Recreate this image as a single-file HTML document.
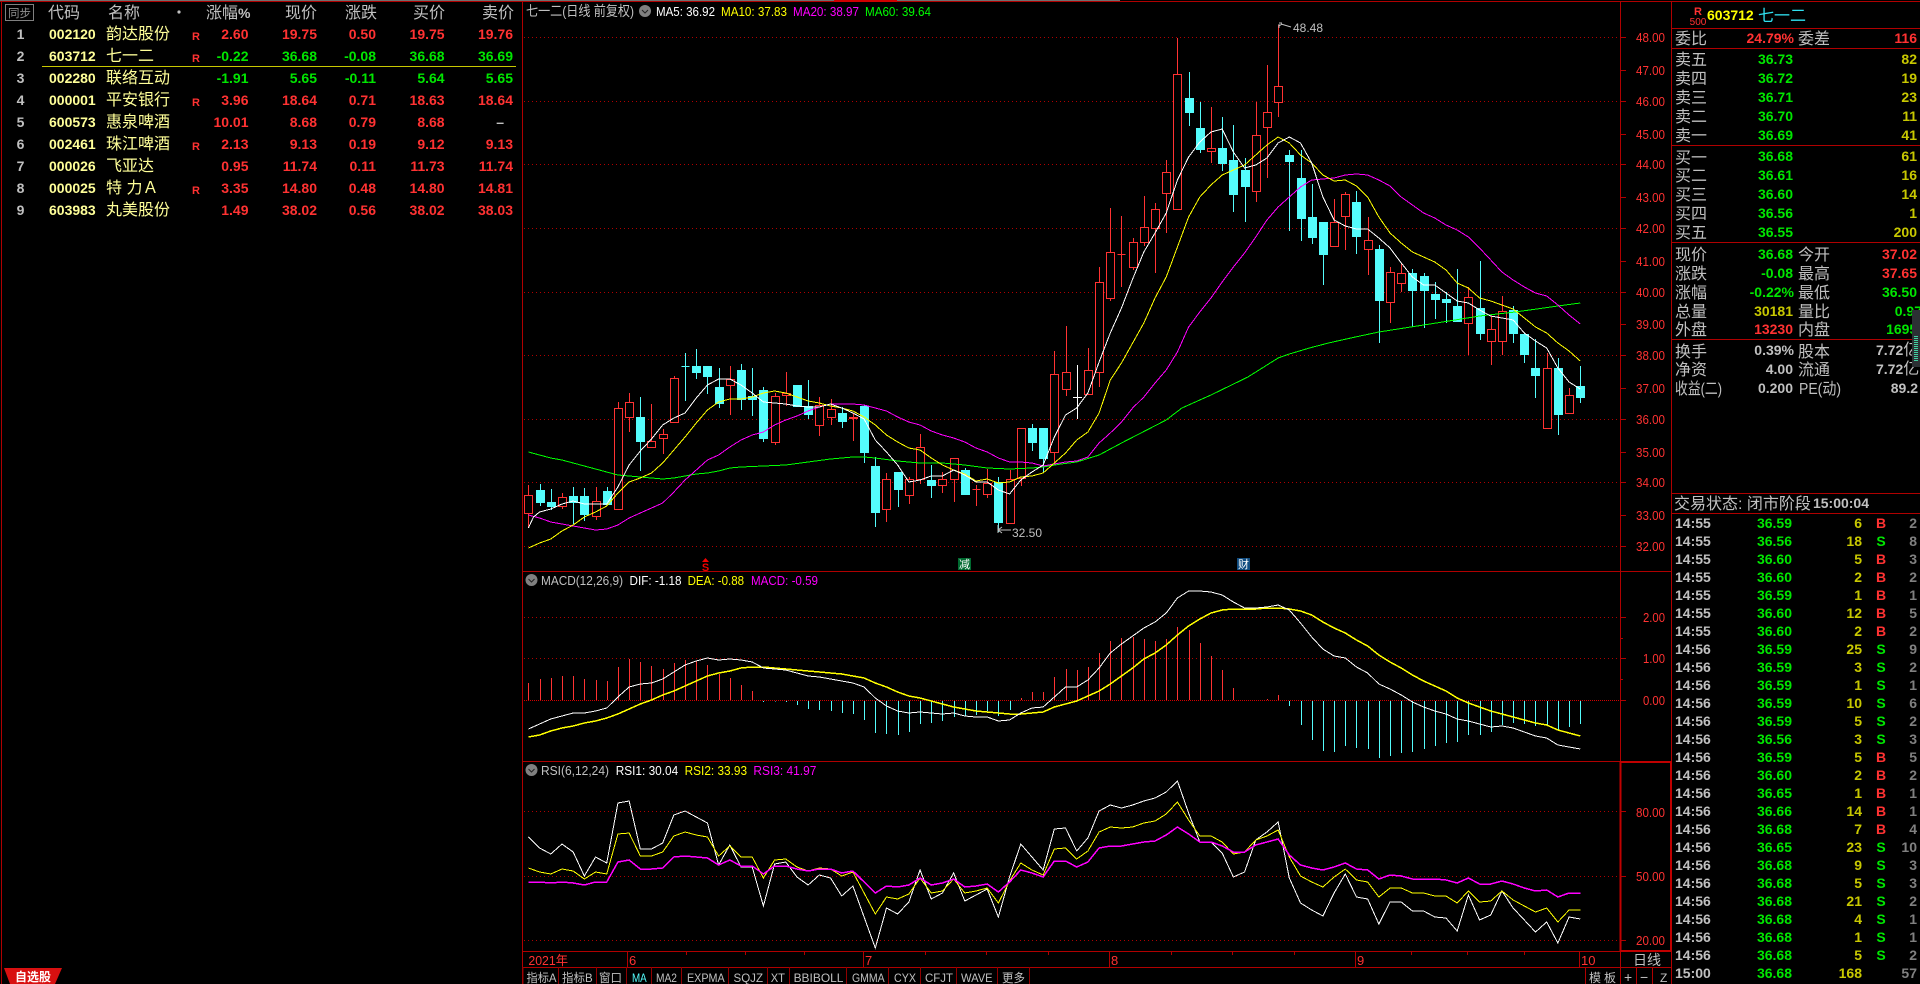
<!DOCTYPE html>
<html lang="zh-CN"><head><meta charset="utf-8"><title>七一二 日线</title>
<style>
html,body{margin:0;padding:0;background:#000;width:1920px;height:984px;overflow:hidden}
body{position:relative;font-family:"Liberation Sans","WenQuanYi Zen Hei","Noto Sans CJK SC",sans-serif}
svg{position:absolute;left:0;top:0;font-family:"Liberation Sans","WenQuanYi Zen Hei","Noto Sans CJK SC",sans-serif}
table{position:absolute;border-collapse:collapse;table-layout:fixed;font-size:14px;font-weight:bold}
td{padding:0;white-space:nowrap;overflow:visible}
#list{left:0;top:23px;width:513px}
#list tr{height:22px}
#list td{text-align:right;color:#ff3232;line-height:22px}
#list td:nth-child(1){text-align:center;color:#c0c0c0}
#list td:nth-child(2){text-align:left;padding-left:8px;color:#ffff99}
#list td:nth-child(3){text-align:left;color:#ffff99;font-size:16px;font-weight:normal;position:relative;top:1px}
#list td:nth-child(4){text-align:left;padding-left:2px;font-size:11px;position:relative;top:3px}
#list tr.d td:nth-child(n+5){color:#00e600}
#tick{left:1675px;top:514px;width:242px}
#tick tr{height:18px}
#tick td{line-height:18px;text-align:right}
#tick td:nth-child(1){text-align:left;color:#c0c0c0}
#tick td:nth-child(2){color:#00e600}
#tick td:nth-child(3){color:#c8c800}
#tick td:nth-child(4){text-align:center}
#tick td:nth-child(5){color:#808080}
.B{color:#ff3232}.S{color:#00e600}
.l{font-size:16px;fill:#c0c0c0}
.n{font-size:14px;font-weight:bold;text-anchor:end}
.a{font-size:13px;fill:#ff3232}
.m{font-size:13px}
.t{font-size:12px;fill:#c0c0c0}
.gr{fill:#00e600}.re{fill:#ff3232}.ye{fill:#c8c800}.gy{fill:#c0c0c0}
.ln{fill:none;vector-effect:non-scaling-stroke;stroke-width:1;shape-rendering:crispEdges}
</style></head><body>
<svg width="1920" height="984" viewBox="0 0 1920 984">
<!-- frame -->
<g shape-rendering="crispEdges">
<path d="M0 0.5H1120" stroke="#707070" fill="none"/>
<path d="M0 1.5H1920" stroke="#b00000" fill="none"/>
<path d="M834 1H897" stroke="#d00000" stroke-width="2" fill="none"/>
<path d="M1.5 1V984M522.5 1V984M1620.5 1V967M1671.5 1V984M523 571.5H1671M523 761.5H1671M523 951.5H1671M523 967.5H1671M1671 28.5H1920M1671 48.5H1920M1671 145.5H1920M1671 242.5H1920M1671 339.5H1920M1671 493.5H1920M1671 513.5H1920M1585.5 967V984M1620.5 967V984M1636.5 967V984M1652.5 967V984" stroke="#b00000" fill="none"/>
<path d="M523 967V984M558.5 967V984M596.5 967V984M626.5 967V984M651.5 967V984M681.5 967V984M728.5 967V984M767.5 967V984M789.5 967V984M846.5 967V984M888.5 967V984M920.5 967V984M956.5 967V984M997.5 967V984M1029.5 967V984" stroke="#900000" fill="none"/>
<path d="M1620 762H1671M1620.5 761V951M1671 761V951M1620 951H1671" stroke="#c00000" stroke-width="2" fill="none"/>
<path d="M627.5 952V967M863.5 952V967M1109.5 952V967M1355.5 952V967M1579.5 952V967M686.5 952V955M745.5 952V955M804.5 952V955M925.5 952V955M986.5 952V955M1048.5 952V955M1171.5 952V955M1232.5 952V955M1294.5 952V955M1411.5 952V955M1467.5 952V955M1524.5 952V955" stroke="#b00000" fill="none"/>
<!-- grid -->
<path d="M524 37.5H1620M524 101.5H1620M524 164.5H1620M524 228.5H1620M524 292.5H1620M524 355.5H1620M524 419.5H1620M524 482.5H1620M524 546.5H1620M524 617.5H1620M524 658.5H1620M524 811.5H1620M524 876.5H1620M524 940.5H1620" stroke="#b00000" stroke-dasharray="1 3" fill="none"/>
<path d="M524 700.5H1620" stroke="#d00000" stroke-dasharray="1 1" fill="none"/>
<!-- axis ticks -->
<path d="M1620 37.5h6M1620 70.5h6M1620 101.5h6M1620 134.5h6M1620 164.5h6M1620 197.5h6M1620 228.5h6M1620 261.5h6M1620 292.5h6M1620 324.5h6M1620 355.5h6M1620 388.5h6M1620 419.5h6M1620 452.5h6M1620 482.5h6M1620 515.5h6M1620 546.5h6M1620 617.5h6M1620 638.5h3M1620 658.5h6M1620 679.5h3M1620 700.5h6M1620 811.5h6M1620 876.5h6M1620 940.5h6" stroke="#b00000" fill="none"/>
<!-- red wicks -->
<path d="M528.5 485V528M562.5 493V509M596.5 487V520M618.5 402V509M629.5 393V432M651.5 404V447M663.5 429V454M674.5 376V423M730.5 366V415M775.5 393V445M786.5 372V406M819.5 397V436M831.5 399V425M853.5 413V441M886.5 473V522M909.5 477V504M920.5 434V484M942.5 472V493M954.5 458V502M976.5 485V506M987.5 469V498M1010.5 470V523M1021.5 428V486M1054.5 351V463M1066.5 326V396M1088.5 348V394M1099.5 267V387M1110.5 208V301M1121.5 216V287M1133.5 238V270M1144.5 196V246M1155.5 203V273M1166.5 160V233M1177.5 38V209M1211.5 107V163M1256.5 102V202M1267.5 65V178M1278.5 25V117M1334.5 199V246M1345.5 192V250M1368.5 217V275M1390.5 267V323M1401.5 263V292M1468.5 287V355M1491.5 316V365M1502.5 296V355M1547.5 353V428M1569.5 388V413" stroke="#ff3232" fill="none"/>
<!-- red bodies -->
<path d="M524.5 495.5h8v18h-8zM558.5 497.5h8v9h-8zM592.5 501.5h8v15h-8zM614.5 408.5h8v101h-8zM625.5 402.5h8v15h-8zM647.5 441.5h8v6h-8zM659.5 434.5h8v4h-8zM670.5 378.5h8v44h-8zM726.5 379.5h8v6h-8zM771.5 396.5h8v46h-8zM782.5 393.5h8v2h-8zM815.5 405.5h8v20h-8zM827.5 409.5h8v8h-8zM849.5 417.5h8v1h-8zM882.5 479.5h8v30h-8zM905.5 479.5h8v16h-8zM916.5 447.5h8v32h-8zM938.5 479.5h8v6h-8zM950.5 458.5h8v21h-8zM972.5 489.5h8v0h-8zM983.5 483.5h8v11h-8zM1006.5 479.5h8v44h-8zM1017.5 428.5h8v50h-8zM1050.5 374.5h8v78h-8zM1062.5 372.5h8v17h-8zM1084.5 370.5h8v24h-8zM1095.5 282.5h8v90h-8zM1106.5 252.5h8v46h-8zM1117.5 254.5h8v0h-8zM1129.5 242.5h8v25h-8zM1140.5 227.5h8v15h-8zM1151.5 209.5h8v19h-8zM1162.5 172.5h8v21h-8zM1173.5 74.5h8v135h-8zM1207.5 148.5h8v3h-8zM1252.5 135.5h8v56h-8zM1263.5 112.5h8v15h-8zM1274.5 86.5h8v16h-8zM1330.5 222.5h8v24h-8zM1341.5 194.5h8v22h-8zM1364.5 240.5h8v9h-8zM1386.5 272.5h8v30h-8zM1397.5 273.5h8v10h-8zM1464.5 297.5h8v26h-8zM1487.5 329.5h8v12h-8zM1498.5 311.5h8v30h-8zM1543.5 368.5h8v60h-8zM1565.5 395.5h8v18h-8z" stroke="#ff3232" fill="#000"/>
<!-- cyan wicks -->
<path d="M540.5 484V506M551.5 489V510M573.5 487V524M584.5 488V521M607.5 487V504M640.5 397V471M685.5 353V401M696.5 349V379M707.5 366V394M719.5 368V408M741.5 364V410M752.5 368V416M763.5 387V442M797.5 385V406M808.5 380V419M842.5 407V428M864.5 405V463M875.5 457V527M898.5 472V507M931.5 465V498M965.5 468V495M998.5 477V532M1032.5 424V451M1043.5 428V472M1189.5 72V126M1200.5 102V153M1222.5 117V171M1233.5 125V212M1245.5 158V222M1289.5 150V231M1301.5 150V241M1312.5 184V244M1323.5 222V285M1356.5 191V254M1379.5 245V343M1412.5 269V327M1424.5 273V328M1435.5 282V319M1446.5 292V323M1457.5 269V322M1480.5 261V340M1513.5 306V343M1524.5 333V363M1535.5 339V398M1558.5 358V435M1580.5 366V403" stroke="#54fcfc" fill="none"/>
<!-- cyan bodies -->
<path d="M536.5 490.5h8v12h-8zM547.5 502.5h8v4h-8zM569.5 496.5h8v6h-8zM580.5 496.5h8v18h-8zM603.5 491.5h8v13h-8zM636.5 417.5h8v24h-8zM681.5 366.5h8v0h-8zM692.5 366.5h8v6h-8zM703.5 366.5h8v10h-8zM715.5 387.5h8v16h-8zM737.5 370.5h8v29h-8zM748.5 396.5h8v3h-8zM759.5 390.5h8v48h-8zM793.5 385.5h8v21h-8zM804.5 406.5h8v8h-8zM838.5 413.5h8v8h-8zM860.5 406.5h8v46h-8zM871.5 466.5h8v46h-8zM894.5 472.5h8v17h-8zM927.5 480.5h8v5h-8zM961.5 470.5h8v24h-8zM994.5 482.5h8v40h-8zM1028.5 428.5h8v14h-8zM1039.5 428.5h8v30h-8zM1185.5 98.5h8v14h-8zM1196.5 128.5h8v21h-8zM1218.5 148.5h8v15h-8zM1229.5 160.5h8v34h-8zM1241.5 170.5h8v16h-8zM1285.5 155.5h8v6h-8zM1297.5 178.5h8v40h-8zM1308.5 217.5h8v20h-8zM1319.5 222.5h8v32h-8zM1352.5 202.5h8v34h-8zM1375.5 249.5h8v51h-8zM1408.5 273.5h8v17h-8zM1420.5 276.5h8v14h-8zM1431.5 294.5h8v5h-8zM1442.5 299.5h8v3h-8zM1453.5 306.5h8v15h-8zM1476.5 308.5h8v25h-8zM1509.5 310.5h8v23h-8zM1520.5 334.5h8v20h-8zM1531.5 368.5h8v7h-8zM1554.5 368.5h8v46h-8zM1576.5 386.5h8v11h-8z" stroke="#54fcfc" fill="#54fcfc"/>
<path d="M1077.5 365V419M1073 397.5H1082" stroke="#fff" fill="none"/>
<!-- MACD hist -->
<path d="M528.5 700V683M540.5 700V679M551.5 700V678M562.5 700V676M573.5 700V676M584.5 700V679M596.5 700V680M607.5 700V681M618.5 700V667M629.5 700V659M640.5 700V662M651.5 700V666M663.5 700V669M674.5 700V663M685.5 700V660M696.5 700V661M707.5 700V665M719.5 700V674M730.5 700V678M741.5 700V685M752.5 700V691M1021.5 700V698M1032.5 700V692M1043.5 700V692M1054.5 700V677M1066.5 700V669M1077.5 700V670M1088.5 700V667M1099.5 700V653M1110.5 700V641M1121.5 700V638M1133.5 700V637M1144.5 700V639M1155.5 700V641M1166.5 700V639M1177.5 700V627M1189.5 700V630M1200.5 700V643M1211.5 700V656M1222.5 700V670M1233.5 700V688M1267.5 700V699M1278.5 700V695" stroke="#ff3232" fill="none"/>
<path d="M763.5 701V702M775.5 701V701.5M786.5 701V702M797.5 701V705M808.5 701V709M819.5 701V710M831.5 701V711M842.5 701V713M853.5 701V714M864.5 701V720M875.5 701V733M886.5 701V734M898.5 701V735M909.5 701V732M920.5 701V724M931.5 701V723M942.5 701V721M954.5 701V717M965.5 701V716M976.5 701V715M987.5 701V711M998.5 701V716M1010.5 701V710M1289.5 701V706M1301.5 701V725M1312.5 701V740M1323.5 701V751M1334.5 701V752M1345.5 701V746M1356.5 701V748M1368.5 701V749M1379.5 701V758M1390.5 701V756M1401.5 701V753M1412.5 701V752M1424.5 701V749M1435.5 701V746M1446.5 701V743M1457.5 701V742M1468.5 701V735M1480.5 701V735M1491.5 701V732M1502.5 701V725M1513.5 701V723M1524.5 701V724M1535.5 701V726M1547.5 701V725M1558.5 701V730M1569.5 701V727M1580.5 701V724" stroke="#54fcfc" fill="none"/>
</g>
<!-- lines -->
<g transform="translate(528.4 0) scale(11.19 1)">
<polyline class="ln" stroke="#00ff00" points="0,452 1,455 2,458 3,460 4,463 5,466 6,469 7,472 8,475 9,476 10,477 11,478 12,479 13,478 14,476 15,474 16,473 17,471 18,468 19,467 21,466 23,465 25,462 27,459 29,457 30,457 31,458 33,461 35,463 37,463 39,465 41,468 43,469 45,468 46,467 47.6,464 49,462 51,455 53,443 57,420 58.4,408 61,395 64.3,377 67,358 68,354 69.8,348 71.5,343 73.9,337 76,332 80,325 81.7,322 85,316 88.2,312 92,306 94,303"/>
<polyline class="ln" stroke="#ff00ff" points="0,515 1,518 2,522 3,524 4,526 5,528 6,530 7,529 8,525 9,518 10,513 11,508 12,503 13,492 14,480 15,470 16,460 17,455 18,447 19,440 20,435 21,432 22,425 23,420 24,416 25,411 26,407 27,404 28,404 29,404 30,405 31,408 32,411 33,417 34,422 35,425 36,431 37,435 38,438 39,442 40,448 41,452 42,458 43,462 44,462 45,463 46,466 47,464 48,462 49,461 50,457 51,443 52,433 53,422 54,408 55,397 56,383 57,370 58,352 59,327 60,312 61,298 62,282 63,267 64,253 65,237 66,220 67,207 68,197 69,187 70,180 71,179 72,178 73,175 74,174 75,175 76,180 77,186 78,197 79,205 80,213 81,218 82,225 83,230 84,237 85,248 86,260 87,272 88,280 89,287 90,293 91,296 92,305 93,315 94,324"/>
<polyline class="ln" stroke="#ffff00" points="0,548 1,543 2,539 3,531 4,525 5,517 6,512 7,506 8,493 9,482 10,478 11,473 12,463 13,450 14,437 15,423 16,410 17,402 18,399 19,399 20,397 21,393 22,391 23,393 24,397 25,401 26,403 27,406 28,408 29,411 30,417 31,425 32,435 33,442 34,448 35,450 36,458 37,465 38,470 39,474 40,481 41,479 42,483 43,482 44,477 45,476 46,473 47,463 48,453 49,440 50,432 51,413 52,380 53,363 54,343 55,323 56,298 57,277 58,247 59,217 60,197 61,185 62,175 63,170 64,165 65,155 66,145 67,137 68,143 69,155 70,163 71,175 72,181 73,180 74,186 75,197 76,217 77,233 78,243 79,252 80,257 81,262 82,270 83,283 84,288 85,298 86,301 87,305 88,309 89,318 90,327 91,333 92,343 93,351 94,361"/>
<polyline class="ln" stroke="#ffffff" points="0,528 0.45,517 1,512 2,509 3,504 4,501 5,504 6,504 7,504 8,487 9,465 10,451 11,439 12,425 13,418 14,413 15,398 16,385 17,379 18,379 19,385 20,393 21,402 22,403 23,404 24,406 25,407 26,407 27,404 28,408 29,413 30,419 31,440 32,452 33,465 34,482 35,480 36,476 37,476 38,470 39,475 40,482 41,482 42,490 43,494 44,480 45,472 46,465 47,437 48,415 49,408 50,393 51,362 52,333 53,308 54,279 55,252 56,233 57,213 58,180 59,157 60,142 61,132 62,129 63,152 64,168 65,165 66,158 67,143 68,137 69,143 70,163 71,197 72,220 73,226 74,229 75,229 76,238 77,248 78,263 79,277 80,285 81,285 82,293 83,301 84,303 85,310 86,316 87,318 88,320 89,333 90,341 91,348 92,368 93,382 94,389"/>
<!-- MACD -->
<polyline class="ln" stroke="#ffff00" points="0,737 1,735 2,731 3,728 4,726 5,723 6,721 7,718 8,714 9,709 10,704 11,700 12,695 13,691 14,686 15,681 16,676 17,673 18,671 19,668 20,667 21,667 22,668 23,669 24,670 25,671 26,672 27,673 28,674 29,676 30,678 31,683 32,687 33,692 34,696 35,698 36,701 37,704 38,707 39,709 40,711 41,712 42,713 43,714 44,714 45,713 46,712 47,707 48,704 49,701 50,696 51,691 52,684 53,676 54,668 55,659 56,653 57,645 58,635 59,626 60,619 61,613 62,610 63,609 64,609 65,609 66,608 67,608 68,609 69,611 70,615 71,622 72,628 73,633 74,640 75,646 76,655 77,662 78,668 79,675 80,681 81,686 82,691 83,698 84,703 85,707 86,711 87,714 88,717 89,720 90,723 91,725 92,730 93,733 94,736" style="stroke-width:1.5"/>
<polyline class="ln" stroke="#ffffff" points="0,729 1,724 2,719 3,716 4,713 5,713 6,711 7,708 8,697 9,687 10,684 11,683 12,679 13,672 14,665 15,661 16,658 17,660 18,659 19,660 20,662 21,668 22,669 23,670 24,673 25,676 26,677 27,679 28,681 29,683 30,687 31,698 32,706 33,711 34,713 35,712 36,713 37,714 38,713 39,716 40,717 41,717 42,721 43,720 44,713 45,708 46,707 47,697 48,687 49,687 50,680 51,668 52,653 53,644 54,636 55,628 56,622 57,613 58,598 59,591 60,591 61,592 62,595 63,602 64,608 65,608 66,607 67,605 68,610 69,623 70,637 71,649 72,656 73,658 74,667 75,673 76,684 77,689 78,695 79,702 80,707 81,711 82,714 83,719 84,721 85,724 86,727 87,726 88,728 89,732 90,736 91,738 92,745 93,747 94,749"/>
<!-- RSI -->
<polyline class="ln" stroke="#ffffff" points="0,837 1,848 2,854 3,844 4,852 5,876 6,857 7,863 8,803 9,801 10,849 11,849 12,843 13,815 14,811 15,817 16,823 17,865 18,845 19,867 20,867 21,906 22,864 23,862 24,877 25,885 26,875 27,878 28,896 29,886 30,917 31,948 32,908 33,914 34,902 35,870 36,899 37,893 38,873 39,901 40,895 41,889 42,917 43,877 44,844 45,857 46,870 47,829 48,828 49,851 50,838 51,811 52,805 53,808 54,805 55,801 56,798 57,792 58,781 59,813 60,842 61,842 62,853 63,877 64,872 65,840 66,832 67,822 68,878 69,903 70,910 71,916 72,893 73,874 74,897 75,899 76,924 77,902 78,902 79,911 80,911 81,917 82,918 83,931 84,895 85,920 86,915 87,891 88,908 89,920 90,932 91,922 92,943 93,917 94,919"/>
<polyline class="ln" stroke="#ffff00" points="0,868 1,872 2,874 3,869 4,871 5,879 6,872 7,874 8,834 9,833 10,856 11,856 12,852 13,836 14,832 15,835 16,837 17,856 18,846 19,857 20,857 21,878 22,860 23,859 24,867 25,871 26,868 27,869 28,876 29,872 30,893 31,914 32,897 33,899 34,894 35,878 36,893 37,891 38,879 39,893 40,891 41,888 42,903 43,881 44,863 45,870 46,875 47,849 48,848 49,859 50,851 51,832 52,827 53,828 54,827 55,823 56,821 57,814 58,802 59,820 60,836 61,836 62,842 63,854 64,852 65,840 66,836 67,830 68,857 69,876 70,882 71,887 72,877 73,869 74,880 75,882 76,897 77,888 78,888 79,893 80,893 81,896 82,896 83,903 84,891 85,902 86,901 87,891 88,900 89,906 90,912 91,908 92,922 93,910 94,910"/>
<polyline class="ln" stroke="#ff00ff" points="0,882 1,882 2,883 3,882 4,883 5,885 6,882 7,882 8,862 9,860 10,869 11,869 12,868 13,857 14,856 15,857 16,858 17,865 18,860 19,866 20,866 21,874 22,866 23,866 24,869 25,871 26,869 27,869 28,873 29,871 30,882 31,893 32,886 33,887 34,885 35,878 36,885 37,883 38,879 39,887 40,886 41,884 42,892 43,882 44,870 45,873 46,877 47,861 48,861 49,867 50,862 51,848 52,846 53,846 54,844 55,842 56,841 57,835 58,827 59,834 60,842 61,842 62,846 63,852 64,852 65,845 66,842 67,839 68,855 69,865 70,868 71,870 72,867 73,863 74,869 75,870 76,879 77,875 78,876 79,879 80,879 81,879 82,880 83,883 84,878 85,884 86,884 87,881 88,884 89,888 90,891 91,890 92,897 93,893 94,893" style="stroke-width:1.5"/>
</g>
<!-- annotations -->
<g fill="none" stroke="#c0c0c0" stroke-width="1">
<path d="M1279 28V24M1279 23h3M1281 24L1291 27M1279 26l3-2"/>
<path d="M998 533V525M998 530h13M998 530l4-3M998 530l4 3"/>
</g>
<text x="1293" y="32" font-size="12" fill="#c0c0c0" textLength="30" lengthAdjust="spacingAndGlyphs">48.48</text>
<text x="1012" y="537" font-size="12" fill="#c0c0c0" textLength="30" lengthAdjust="spacingAndGlyphs">32.50</text>
<polygon points="705.5,558 702,562 709,562" fill="#f00000"/>
<text x="705.5" y="571" font-size="11" font-weight="bold" fill="#f00000" text-anchor="middle">S</text>
<rect x="958" y="558" width="13" height="12" fill="#006a30"/><text x="964.5" y="568" font-size="11" fill="#fff" text-anchor="middle">减</text>
<rect x="1237" y="558" width="13" height="12" fill="#104c80"/><text x="1243.5" y="568" font-size="11" fill="#fff" text-anchor="middle">财</text>
<!-- legends -->
<text x="526" y="16" font-size="14" fill="#c0c0c0" textLength="108" lengthAdjust="spacingAndGlyphs">七一二(日线 前复权)</text>
<g fill="#808080"><circle cx="645" cy="11" r="6"/><circle cx="531.5" cy="580" r="6"/><circle cx="531.5" cy="770" r="6"/></g>
<path d="M642 10l3 3 3-3M528.5 579l3 3 3-3M528.5 769l3 3 3-3" fill="none" stroke="#222"/>
<g class="m">
<text x="656" y="16" fill="#fff" textLength="59" lengthAdjust="spacingAndGlyphs">MA5: 36.92</text>
<text x="721" y="16" fill="#ff0" textLength="66" lengthAdjust="spacingAndGlyphs">MA10: 37.83</text>
<text x="793" y="16" fill="#f0f" textLength="66" lengthAdjust="spacingAndGlyphs">MA20: 38.97</text>
<text x="865" y="16" fill="#0f0" textLength="66" lengthAdjust="spacingAndGlyphs">MA60: 39.64</text>
<text x="541" y="585" fill="#c0c0c0" textLength="82" lengthAdjust="spacingAndGlyphs">MACD(12,26,9)</text>
<text x="629.5" y="585" fill="#fff" textLength="52" lengthAdjust="spacingAndGlyphs">DIF: -1.18</text>
<text x="687.6" y="585" fill="#ff0" textLength="56.5" lengthAdjust="spacingAndGlyphs">DEA: -0.88</text>
<text x="751" y="585" fill="#f0f" textLength="67" lengthAdjust="spacingAndGlyphs">MACD: -0.59</text>
<text x="541" y="775" fill="#c0c0c0" textLength="68" lengthAdjust="spacingAndGlyphs">RSI(6,12,24)</text>
<text x="615.7" y="775" fill="#fff" textLength="62.5" lengthAdjust="spacingAndGlyphs">RSI1: 30.04</text>
<text x="684.6" y="775" fill="#ff0" textLength="62.5" lengthAdjust="spacingAndGlyphs">RSI2: 33.93</text>
<text x="753.4" y="775" fill="#f0f" textLength="63" lengthAdjust="spacingAndGlyphs">RSI3: 41.97</text>
</g>
<!-- axis labels -->
<g class="a">
<text x="1636" y="42" textLength="29" lengthAdjust="spacingAndGlyphs">48.00</text>
<text x="1636" y="75" textLength="29" lengthAdjust="spacingAndGlyphs">47.00</text>
<text x="1636" y="106" textLength="29" lengthAdjust="spacingAndGlyphs">46.00</text>
<text x="1636" y="139" textLength="29" lengthAdjust="spacingAndGlyphs">45.00</text>
<text x="1636" y="169" textLength="29" lengthAdjust="spacingAndGlyphs">44.00</text>
<text x="1636" y="202" textLength="29" lengthAdjust="spacingAndGlyphs">43.00</text>
<text x="1636" y="233" textLength="29" lengthAdjust="spacingAndGlyphs">42.00</text>
<text x="1636" y="266" textLength="29" lengthAdjust="spacingAndGlyphs">41.00</text>
<text x="1636" y="297" textLength="29" lengthAdjust="spacingAndGlyphs">40.00</text>
<text x="1636" y="329" textLength="29" lengthAdjust="spacingAndGlyphs">39.00</text>
<text x="1636" y="360" textLength="29" lengthAdjust="spacingAndGlyphs">38.00</text>
<text x="1636" y="393" textLength="29" lengthAdjust="spacingAndGlyphs">37.00</text>
<text x="1636" y="424" textLength="29" lengthAdjust="spacingAndGlyphs">36.00</text>
<text x="1636" y="457" textLength="29" lengthAdjust="spacingAndGlyphs">35.00</text>
<text x="1636" y="487" textLength="29" lengthAdjust="spacingAndGlyphs">34.00</text>
<text x="1636" y="520" textLength="29" lengthAdjust="spacingAndGlyphs">33.00</text>
<text x="1636" y="551" textLength="29" lengthAdjust="spacingAndGlyphs">32.00</text>
<text x="1643" y="622" textLength="22" lengthAdjust="spacingAndGlyphs">2.00</text>
<text x="1643" y="663" textLength="22" lengthAdjust="spacingAndGlyphs">1.00</text>
<text x="1643" y="705" textLength="22" lengthAdjust="spacingAndGlyphs">0.00</text>
<text x="1636" y="817" textLength="29" lengthAdjust="spacingAndGlyphs">80.00</text>
<text x="1636" y="881" textLength="29" lengthAdjust="spacingAndGlyphs">50.00</text>
<text x="1636" y="945" textLength="29" lengthAdjust="spacingAndGlyphs">20.00</text>
<text x="528.4" y="965" textLength="39.6" lengthAdjust="spacingAndGlyphs">2021年</text>
<text x="629" y="965">6</text><text x="865" y="965">7</text><text x="1111" y="965">8</text><text x="1357" y="965">9</text><text x="1581" y="965">10</text>
</g>
<text x="1633" y="965" font-size="14" fill="#c0c0c0">日线</text>
<!-- bottom tabs -->
<g class="t">
<text x="526.5" y="982" textLength="30" lengthAdjust="spacingAndGlyphs">指标A</text>
<text x="562" y="982" textLength="30.7" lengthAdjust="spacingAndGlyphs">指标B</text>
<text x="599" y="982" textLength="23" lengthAdjust="spacingAndGlyphs">窗口</text>
<text x="632" y="982" style="fill:#54fcfc" textLength="14.7" lengthAdjust="spacingAndGlyphs">MA</text>
<text x="656" y="982" textLength="21" lengthAdjust="spacingAndGlyphs">MA2</text>
<text x="687" y="982" textLength="37.7" lengthAdjust="spacingAndGlyphs">EXPMA</text>
<text x="733.5" y="982" textLength="29.5" lengthAdjust="spacingAndGlyphs">SQJZ</text>
<text x="770.7" y="982" textLength="14.3" lengthAdjust="spacingAndGlyphs">XT</text>
<text x="793.6" y="982" textLength="49.8" lengthAdjust="spacingAndGlyphs">BBIBOLL</text>
<text x="852" y="982" textLength="32.7" lengthAdjust="spacingAndGlyphs">GMMA</text>
<text x="894" y="982" textLength="22" lengthAdjust="spacingAndGlyphs">CYX</text>
<text x="925" y="982" textLength="28" lengthAdjust="spacingAndGlyphs">CFJT</text>
<text x="961" y="982" textLength="31.6" lengthAdjust="spacingAndGlyphs">WAVE</text>
<text x="1002" y="982" textLength="23" lengthAdjust="spacingAndGlyphs">更多</text>
<text x="1589" y="982" textLength="27" lengthAdjust="spacing">模板</text>
<text x="1624" y="982" style="font-size:14px">+</text>
<text x="1640" y="982" style="font-size:14px">−</text>
<text x="1660" y="982">Z</text>
</g>
<!-- 自选股 tab -->
<polygon points="4,968 62,968 55,984 10,984" fill="#d81010"/>
<text x="33" y="981" font-size="12" font-weight="bold" fill="#fff" text-anchor="middle">自选股</text>
<!-- list header -->
<rect x="5.5" y="4.5" width="28" height="16" fill="none" stroke="#808080" shape-rendering="crispEdges"/>
<text x="8" y="17" font-size="11.5" fill="#909090">同步</text>
<g class="l">
<text x="48" y="18">代码</text><text x="108" y="18">名称</text>
<text x="206" y="18">涨幅<tspan font-weight="bold" font-size="14">%</tspan></text>
<text x="285" y="18">现价</text><text x="345" y="18">涨跌</text><text x="413" y="18">买价</text><text x="482" y="18">卖价</text>
</g>
<circle cx="179" cy="12" r="1.6" fill="#c0c0c0"/>
<path d="M42 66.5H516" stroke="#c8c800" shape-rendering="crispEdges"/>
<!-- right panel head -->
<text x="1698" y="15" font-size="11" font-weight="bold" fill="#ff3232" text-anchor="middle">R</text>
<text x="1698" y="25" font-size="10" fill="#ff3232" text-anchor="middle">500</text>
<text x="1707" y="20" font-size="14" font-weight="bold" fill="#ffff00">603712</text>
<text x="1758" y="21" font-size="16" fill="#30e0f0">七一二</text>
<g class="l">
<text x="1675" y="44">委比</text><text x="1798" y="44">委差</text>
<text x="1675" y="65">卖五</text><text x="1675" y="84">卖四</text><text x="1675" y="103">卖三</text><text x="1675" y="122">卖二</text><text x="1675" y="141">卖一</text>
<text x="1675" y="163">买一</text><text x="1675" y="181">买二</text><text x="1675" y="200">买三</text><text x="1675" y="219">买四</text><text x="1675" y="238">买五</text>
<text x="1675" y="260">现价</text><text x="1798" y="260">今开</text>
<text x="1675" y="279">涨跌</text><text x="1798" y="279">最高</text>
<text x="1675" y="298">涨幅</text><text x="1798" y="298">最低</text>
<text x="1675" y="317">总量</text><text x="1798" y="317">量比</text>
<text x="1675" y="335">外盘</text><text x="1798" y="335">内盘</text>
<text x="1675" y="357">换手</text><text x="1798" y="357">股本</text>
<text x="1675" y="375">净资</text><text x="1798" y="375">流通</text>
<text x="1675" y="394" textLength="47" lengthAdjust="spacingAndGlyphs">收益(二)</text><text x="1799" y="394" textLength="42" lengthAdjust="spacingAndGlyphs">PE(动)</text>
<text x="1674" y="509">交易状态: 闭市阶段</text>
</g>
<g class="n">
<text x="1794" y="43" class="re">24.79%</text><text x="1917" y="43" class="re">116</text>
<text x="1793" y="64" class="gr">36.73</text><text x="1917" y="64" class="ye">82</text>
<text x="1793" y="83" class="gr">36.72</text><text x="1917" y="83" class="ye">19</text>
<text x="1793" y="102" class="gr">36.71</text><text x="1917" y="102" class="ye">23</text>
<text x="1793" y="121" class="gr">36.70</text><text x="1917" y="121" class="ye">11</text>
<text x="1793" y="140" class="gr">36.69</text><text x="1917" y="140" class="ye">41</text>
<text x="1793" y="161" class="gr">36.68</text><text x="1917" y="161" class="ye">61</text>
<text x="1793" y="180" class="gr">36.61</text><text x="1917" y="180" class="ye">16</text>
<text x="1793" y="199" class="gr">36.60</text><text x="1917" y="199" class="ye">14</text>
<text x="1793" y="218" class="gr">36.56</text><text x="1917" y="218" class="ye">1</text>
<text x="1793" y="237" class="gr">36.55</text><text x="1917" y="237" class="ye">200</text>
<text x="1793" y="259" class="gr">36.68</text><text x="1917" y="259" class="re">37.02</text>
<text x="1793" y="278" class="gr">-0.08</text><text x="1917" y="278" class="re">37.65</text>
<text x="1794" y="297" class="gr">-0.22%</text><text x="1917" y="297" class="gr">36.50</text>
<text x="1793" y="316" class="ye">30181</text><text x="1922" y="316" class="gr">0.97</text>
<text x="1793" y="334" class="re">13230</text><text x="1925" y="334" class="gr">16951</text>
<text x="1794" y="355" class="gy">0.39%</text>
<text x="1793" y="374" class="gy">4.00</text>
<text x="1793" y="393" class="gy">0.200</text><text x="1918" y="393" class="gy">89.2</text>
<text x="1869" y="508" class="gy">15:00:04</text>
</g>
<text x="1876" y="355" font-size="14" font-weight="bold" class="gy">7.72<tspan font-size="16" font-weight="normal">亿</tspan></text>
<text x="1876" y="374" font-size="14" font-weight="bold" class="gy">7.72<tspan font-size="16" font-weight="normal">亿</tspan></text>
<rect x="1912" y="310" width="8" height="57" fill="#2c3034"/>
<path d="M1916 336V362" stroke="#40d0a0" stroke-width="4" stroke-dasharray="1 1" fill="none"/>
</svg>
<table id="list"><colgroup><col style="width:41px"><col style="width:65px"><col style="width:84px"><col style="width:15px"><col style="width:43.5px"><col style="width:68.5px"><col style="width:59px"><col style="width:68.6px"><col style="width:68.4px"></colgroup>
<tr><td>1</td><td>002120</td><td>韵达股份</td><td>R</td><td>2.60</td><td>19.75</td><td>0.50</td><td>19.75</td><td>19.76</td></tr>
<tr class="d"><td>2</td><td>603712</td><td>七一二</td><td>R</td><td>-0.22</td><td>36.68</td><td>-0.08</td><td>36.68</td><td>36.69</td></tr>
<tr class="d"><td>3</td><td>002280</td><td>联络互动</td><td></td><td>-1.91</td><td>5.65</td><td>-0.11</td><td>5.64</td><td>5.65</td></tr>
<tr><td>4</td><td>000001</td><td>平安银行</td><td>R</td><td>3.96</td><td>18.64</td><td>0.71</td><td>18.63</td><td>18.64</td></tr>
<tr><td>5</td><td>600573</td><td>惠泉啤酒</td><td></td><td>10.01</td><td>8.68</td><td>0.79</td><td>8.68</td><td style="color:#c0c0c0;padding-right:9px">–</td></tr>
<tr><td>6</td><td>002461</td><td>珠江啤酒</td><td>R</td><td>2.13</td><td>9.13</td><td>0.19</td><td>9.12</td><td>9.13</td></tr>
<tr><td>7</td><td>000026</td><td>飞亚达</td><td></td><td>0.95</td><td>11.74</td><td>0.11</td><td>11.73</td><td>11.74</td></tr>
<tr><td>8</td><td>000025</td><td>特 力Ａ</td><td>R</td><td>3.35</td><td>14.80</td><td>0.48</td><td>14.80</td><td>14.81</td></tr>
<tr><td>9</td><td>603983</td><td>丸美股份</td><td></td><td>1.49</td><td>38.02</td><td>0.56</td><td>38.02</td><td>38.03</td></tr>
</table>
<table id="tick"><colgroup><col style="width:60px"><col style="width:57px"><col style="width:70px"><col style="width:38px"><col style="width:17px"></colgroup>
<tr><td>14:55</td><td>36.59</td><td>6</td><td class="B">B</td><td>2</td></tr>
<tr><td>14:55</td><td>36.56</td><td>18</td><td class="S">S</td><td>8</td></tr>
<tr><td>14:55</td><td>36.60</td><td>5</td><td class="B">B</td><td>3</td></tr>
<tr><td>14:55</td><td>36.60</td><td>2</td><td class="B">B</td><td>2</td></tr>
<tr><td>14:55</td><td>36.59</td><td>1</td><td class="B">B</td><td>1</td></tr>
<tr><td>14:55</td><td>36.60</td><td>12</td><td class="B">B</td><td>5</td></tr>
<tr><td>14:55</td><td>36.60</td><td>2</td><td class="B">B</td><td>2</td></tr>
<tr><td>14:56</td><td>36.59</td><td>25</td><td class="S">S</td><td>9</td></tr>
<tr><td>14:56</td><td>36.59</td><td>3</td><td class="S">S</td><td>2</td></tr>
<tr><td>14:56</td><td>36.59</td><td>1</td><td class="S">S</td><td>1</td></tr>
<tr><td>14:56</td><td>36.59</td><td>10</td><td class="S">S</td><td>6</td></tr>
<tr><td>14:56</td><td>36.59</td><td>5</td><td class="S">S</td><td>2</td></tr>
<tr><td>14:56</td><td>36.56</td><td>3</td><td class="S">S</td><td>3</td></tr>
<tr><td>14:56</td><td>36.59</td><td>5</td><td class="B">B</td><td>5</td></tr>
<tr><td>14:56</td><td>36.60</td><td>2</td><td class="B">B</td><td>2</td></tr>
<tr><td>14:56</td><td>36.65</td><td>1</td><td class="B">B</td><td>1</td></tr>
<tr><td>14:56</td><td>36.66</td><td>14</td><td class="B">B</td><td>1</td></tr>
<tr><td>14:56</td><td>36.68</td><td>7</td><td class="B">B</td><td>4</td></tr>
<tr><td>14:56</td><td>36.65</td><td>23</td><td class="S">S</td><td>10</td></tr>
<tr><td>14:56</td><td>36.68</td><td>9</td><td class="S">S</td><td>3</td></tr>
<tr><td>14:56</td><td>36.68</td><td>5</td><td class="S">S</td><td>3</td></tr>
<tr><td>14:56</td><td>36.68</td><td>21</td><td class="S">S</td><td>2</td></tr>
<tr><td>14:56</td><td>36.68</td><td>4</td><td class="S">S</td><td>1</td></tr>
<tr><td>14:56</td><td>36.68</td><td>1</td><td class="S">S</td><td>1</td></tr>
<tr><td>14:56</td><td>36.68</td><td>5</td><td class="S">S</td><td>2</td></tr>
<tr><td>15:00</td><td>36.68</td><td>168</td><td></td><td>57</td></tr>
</table>
</body></html>
